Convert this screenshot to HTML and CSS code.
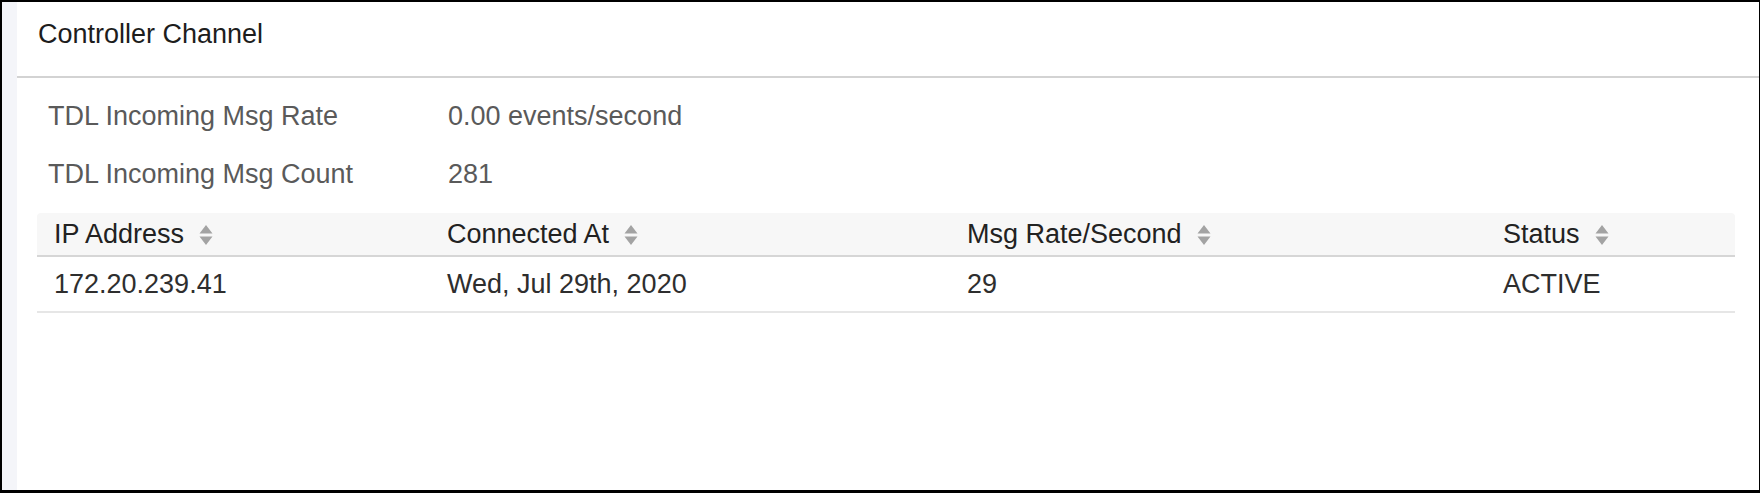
FILE: index.html
```html
<!DOCTYPE html>
<html lang="en">
<head>
    <meta charset="UTF-8">
    <meta name="viewport" content="width=device-width, initial-scale=1.0">
    <title>Controller Channel</title>
    <link rel="stylesheet" href="styles.css">
</head>
<body>
    <div class="frame">
        <div class="rail"></div>

        <section class="card">
            <header class="card-head">Controller Channel</header>

            <div class="card-body">
                <dl class="stats">
                    <div class="stat">
                        <dt>TDL Incoming Msg Rate</dt>
                        <dd>0.00 events/second</dd>
                    </div>
                    <div class="stat">
                        <dt>TDL Incoming Msg Count</dt>
                        <dd>281</dd>
                    </div>
                </dl>

                <table class="grid">
                    <thead>
                        <tr>
                            <th>IP Address<svg class="sort" viewBox="0 0 14 22"><path d="M7 1L13.5 9.5H0.5Z M0.5 12.5H13.5L7 21Z"/></svg></th>
                            <th>Connected At<svg class="sort" viewBox="0 0 14 22"><path d="M7 1L13.5 9.5H0.5Z M0.5 12.5H13.5L7 21Z"/></svg></th>
                            <th>Msg Rate/Second<svg class="sort" viewBox="0 0 14 22"><path d="M7 1L13.5 9.5H0.5Z M0.5 12.5H13.5L7 21Z"/></svg></th>
                            <th>Status<svg class="sort" viewBox="0 0 14 22"><path d="M7 1L13.5 9.5H0.5Z M0.5 12.5H13.5L7 21Z"/></svg></th>
                        </tr>
                    </thead>
                    <tbody>
                        <tr>
                            <td>172.20.239.41</td>
                            <td>Wed, Jul 29th, 2020</td>
                            <td>29</td>
                            <td>ACTIVE</td>
                        </tr>
                    </tbody>
                </table>
            </div>
        </section>
    </div>
</body>
</html>
```

FILE: styles.css
```css
html, body {
    margin: 0;
    padding: 0;
    height: 100%;
    background-color: #000;
}

body {
    font-family: "Liberation Sans", Arial, sans-serif;
    font-size: 27px;
}

.frame {
    display: flex;
    height: calc(100% - 5px);
    margin: 2px 1px 3px 2px;
    background-color: #fff;
}

.rail {
    width: 15px;
    background-color: #f4f5f9;
}

.card {
    flex: 1;
    min-width: 0;
}

.card-head {
    padding: 17px 21px 27px;
    line-height: 30px;
    color: #1d1d1d;
    border-bottom: 2px solid #d3d3d3;
}

.card-body {
    padding: 9px 24px 0 20px;
}

/* key / value pairs above the table */
.stats {
    margin: 0;
}

.stat {
    display: flex;
    padding-left: 11px;
    line-height: 58px;
    color: #5a5a5a;
}

.stat dt {
    width: 400px;
}

.stat dd {
    margin: 0;
}

.grid {
    width: 100%;
    margin-top: 10px;
    border-collapse: separate;
    border-spacing: 0;
    table-layout: fixed;
}

.grid th,
.grid td {
    padding: 0 17px;
    text-align: left;
    white-space: nowrap;
}

.grid th {
    line-height: 42px;
    font-weight: normal;
    color: #222;
    background-color: #f7f7f7;
    border-bottom: 2px solid #d6d6d6;
}

.grid th:first-child {
    border-top-left-radius: 4px;
}

.grid th:last-child {
    border-top-right-radius: 4px;
}

.grid th:nth-child(1) { width: 359px; }
.grid th:nth-child(2) { width: 486px; }
.grid th:nth-child(3) { width: 502px; }

.grid td {
    line-height: 54px;
    color: #2e2e2e;
    border-bottom: 2px solid #e6e6e6;
}

.sort {
    width: 14px;
    height: 22px;
    margin-left: 15px;
    vertical-align: -3px;
    fill: #a3a3a3;
}
```
